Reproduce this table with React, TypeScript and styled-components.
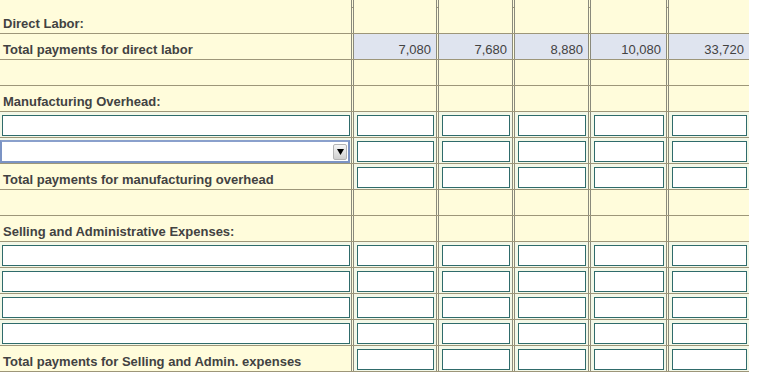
import styled, { createGlobalStyle } from 'styled-components';

type Tone = 'blank' | 'total' | 'input';

type RowSpec =
  | { kind: 'text'; label: string; cells: Tone[]; values?: string[] }
  | { kind: 'input' }
  | { kind: 'select' };

const blanks: Tone[] = ['blank', 'blank', 'blank', 'blank', 'blank'];
const inputs: Tone[] = ['input', 'input', 'input', 'input', 'input'];

const rows: RowSpec[] = [
  { kind: 'text', label: 'Direct Labor:', cells: blanks },
  {
    kind: 'text',
    label: 'Total payments for direct labor',
    cells: ['total', 'total', 'total', 'total', 'total'],
    values: ['7,080', '7,680', '8,880', '10,080', '33,720'],
  },
  { kind: 'text', label: '', cells: blanks },
  { kind: 'text', label: 'Manufacturing Overhead:', cells: blanks },
  { kind: 'input' },
  { kind: 'select' },
  { kind: 'text', label: 'Total payments for manufacturing overhead', cells: inputs },
  { kind: 'text', label: '', cells: blanks },
  { kind: 'text', label: 'Selling and Administrative Expenses:', cells: blanks },
  { kind: 'input' },
  { kind: 'input' },
  { kind: 'input' },
  { kind: 'input' },
  { kind: 'text', label: 'Total payments for Selling and Admin. expenses', cells: inputs },
];

const App = () => {
  return (
    <>
      <GlobalStyle />
      <Sheet>
        <Row $short>
          <LabelCell />
          {blanks.map((t, i) => (
            <NumCell key={i} $tone={t} $last={i === 4} />
          ))}
        </Row>

        {rows.map((row, r) => {
          if (row.kind === 'input') {
            return (
              <Row key={r}>
                <LabelCell $tone="input">
                  <TextBox type="text" />
                </LabelCell>
                {inputs.map((t, i) => (
                  <NumCell key={i} $tone={t} $last={i === 4}>
                    <TextBox type="text" />
                  </NumCell>
                ))}
              </Row>
            );
          }

          if (row.kind === 'select') {
            return (
              <Row key={r}>
                <SelectCell>
                  <SelectBox>
                    <NativeSelect defaultValue="">
                      <option value="" />
                    </NativeSelect>
                    <ArrowButton>
                      <svg width="7" height="6" viewBox="0 0 7 6">
                        <path d="M0 0h7L3.5 6z" fill="#000" />
                      </svg>
                    </ArrowButton>
                  </SelectBox>
                </SelectCell>
                {inputs.map((t, i) => (
                  <NumCell key={i} $tone={t} $last={i === 4}>
                    <TextBox type="text" />
                  </NumCell>
                ))}
              </Row>
            );
          }

          return (
            <Row key={r}>
              <LabelCell>{row.label}</LabelCell>
              {row.cells.map((t, i) => (
                <NumCell key={i} $tone={t} $last={i === 4}>
                  {t === 'input' ? <TextBox type="text" /> : row.values?.[i]}
                </NumCell>
              ))}
            </Row>
          );
        })}
      </Sheet>
    </>
  );
};

export default App;

const GlobalStyle = createGlobalStyle`
  html, body {
    margin: 0;
    padding: 0;
    background: #ffffff;
  }

  body {
    font-family: "Liberation Sans", Arial, sans-serif;
    font-size: 13px;
    color: #424242;
  }
`;

const Sheet = styled.div`
  width: 749px;
  display: flex;
  flex-direction: column;
`;

const Row = styled.div<{ $short?: boolean }>`
  display: grid;
  grid-template-columns: 352px 84px 75px 75px 77px 81px;
  column-gap: 1px;
  height: ${(p) => (p.$short ? '8px' : '26px')};
  box-sizing: border-box;
  border-bottom: 1px solid #9d9679;
  background-color: #fffcdb;
`;

const toneColor = (tone?: Tone) => {
  if (tone === 'total') return '#dfe4ef';
  if (tone === 'input') return '#f3f8e8';
  return '#fffcdb';
};

const LabelCell = styled.div<{ $tone?: Tone }>`
  box-sizing: border-box;
  border-right: 1px solid #8a8a7c;
  background-color: ${(p) => toneColor(p.$tone)};
  padding: ${(p) => (p.$tone === 'input' ? '3px 1px 1px 2px' : '8px 0 0 3px')};
  font-weight: bold;
  line-height: 15px;
  white-space: nowrap;
  overflow: hidden;
`;

const SelectCell = styled.div`
  box-sizing: border-box;
  border-right: 1px solid #8a8a7c;
  background-color: #f3f8e8;
  padding: 2px 1px 0 0;
`;

const NumCell = styled.div<{ $tone: Tone; $last?: boolean }>`
  box-sizing: border-box;
  border-left: 1px solid #8a8a7c;
  border-right: ${(p) => (p.$last ? 'none' : '1px solid #8a8a7c')};
  background-color: ${(p) => toneColor(p.$tone)};
  padding: ${(p) => (p.$tone === 'input' ? '3px 2px 1px 3px' : '8px 5px 0 0')};
  text-align: right;
  line-height: 15px;
`;

const TextBox = styled.input`
  display: block;
  box-sizing: border-box;
  width: 100%;
  height: 21px;
  margin: 0;
  padding: 0 3px;
  border: 1px solid #2f6b6b;
  background: #ffffff;
  font-family: "Liberation Sans", Arial, sans-serif;
  font-size: 13px;
  color: #333;
  outline: none;
`;

const SelectBox = styled.div`
  box-sizing: border-box;
  display: flex;
  align-items: center;
  height: 23px;
  border: 2px solid #7b93c4;
  border-top-color: #8aa0cc;
  background: #ffffff;
  padding-right: 1px;
`;

const NativeSelect = styled.select`
  flex: 1;
  min-width: 0;
  height: 100%;
  border: none;
  background: transparent;
  appearance: none;
  outline: none;
  font-family: "Liberation Sans", Arial, sans-serif;
  font-size: 13px;
`;

const ArrowButton = styled.span`
  box-sizing: border-box;
  width: 14px;
  height: 16px;
  display: flex;
  align-items: center;
  justify-content: center;
  background: linear-gradient(#f6f6f6, #cfcfcf);
  border: 1px solid #b4b4b4;
  border-radius: 2px;
  pointer-events: none;
`;
